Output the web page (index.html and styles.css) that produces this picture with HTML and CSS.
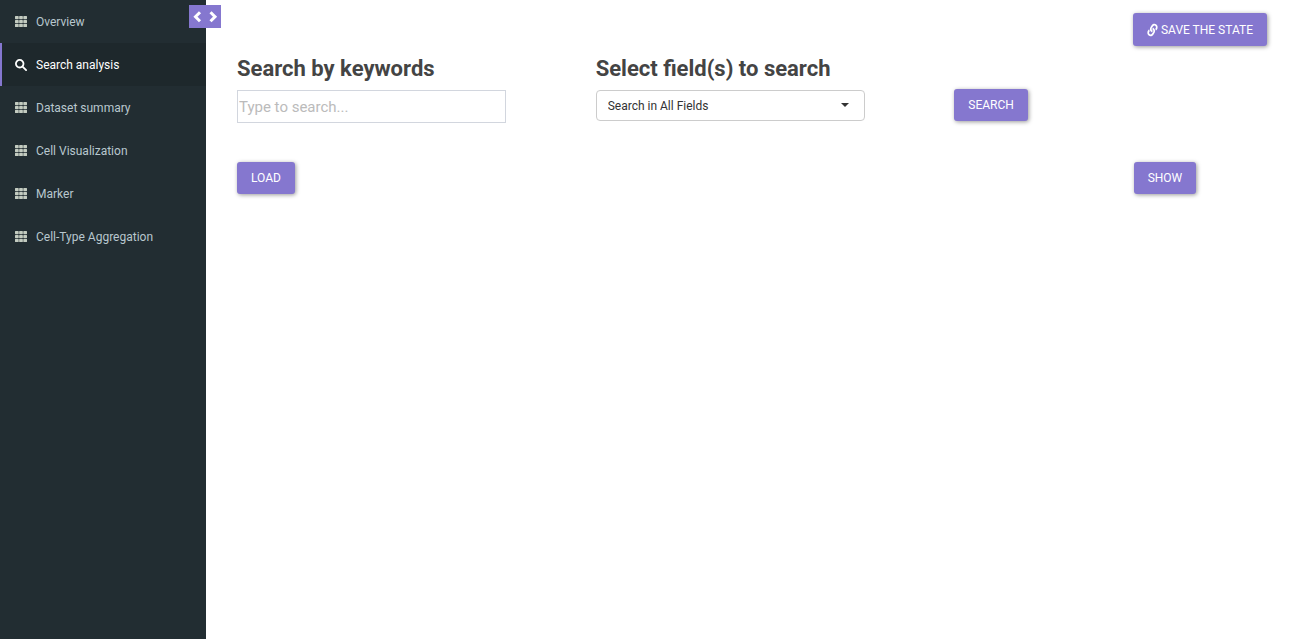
FILE: index.html
```html
<!DOCTYPE html>
<html lang="en">
<head>
<meta charset="utf-8">
<title>Search analysis</title>
<link rel="stylesheet" href="styles.css">
</head>
<body>
<svg class="sprite" aria-hidden="true">
  <symbol id="grid" viewBox="0 0 12 11">
    <path d="M.6 0h2.500q.6 0 .6.6v2q0 .6-.6.6H.6Q0 3.200 0 2.600v-2Q0 0 .6 0zM4.750 0h2.500q.6 0 .6.6v2q0 .6-.6.6h-2.500q-.6 0-.6-.6v-2q0-.6.6-.6zM8.900 0h2.500q.6 0 .6.6v2q0 .6-.6.6H8.900q-.6 0-.6-.6v-2q0-.6.6-.6zM.6 3.900h2.500q.6 0 .6.6v2q0 .6-.6.6H.6q-.6 0-.6-.6v-2q0-.6.6-.6zM4.750 3.900h2.500q.6 0 .6.6v2q0 .6-.6.6h-2.500q-.6 0-.6-.6v-2q0-.6.6-.6zM8.900 3.900h2.500q.6 0 .6.6v2q0 .6-.6.6H8.900q-.6 0-.6-.6v-2q0-.6.6-.6zM.6 7.800h2.500q.6 0 .6.6v2q0 .6-.6.6H.6q-.6 0-.6-.6v-2q0-.6.6-.6zM4.750 7.800h2.500q.6 0 .6.6v2q0 .6-.6.6h-2.500q-.6 0-.6-.6v-2q0-.6.6-.6zM8.900 7.800h2.500q.6 0 .6.6v2q0 .6-.6.6H8.900q-.6 0-.6-.6v-2q0-.6.6-.6z"/>
  </symbol>
</svg>
<div class="app">
  <aside class="sidebar">
    <nav class="menu">
      <a class="item" href="#overview"><svg class="icon"><use href="#grid"/></svg>Overview</a>
      <a class="item active" href="#search" aria-current="page"><svg class="icon search-icon" viewBox="0 0 12 12"><circle cx="4.700" cy="4.700" r="3.800"/><path d="M7.600 7.600l3.500 3.500"/></svg>Search analysis</a>
      <a class="item" href="#dataset"><svg class="icon"><use href="#grid"/></svg>Dataset summary</a>
      <a class="item" href="#cells"><svg class="icon"><use href="#grid"/></svg>Cell Visualization</a>
      <a class="item" href="#marker"><svg class="icon"><use href="#grid"/></svg>Marker</a>
      <a class="item" href="#aggregation"><svg class="icon"><use href="#grid"/></svg>Cell-Type Aggregation</a>
    </nav>
    <button class="toggle" type="button" aria-label="Toggle sidebar">
      <svg class="chevrons" viewBox="0 0 32 23"><path d="M11 7.300L6.500 11.800L11 16.300M21.500 7.300L26 11.800L21.500 16.300"/></svg>
    </button>
  </aside>
  <main class="content">
    <div class="save">
      <button class="btn" type="button"><svg class="link-icon" viewBox="0 0 512 512" preserveAspectRatio="none"><path transform="rotate(-8 256 256)" d="M326.612 185.391c59.747 59.809 58.927 155.698.36 214.590-.11.120-.24.250-.36.370l-67.200 67.200c-59.270 59.270-155.699 59.262-214.960 0-59.270-59.260-59.270-155.700 0-214.960l37.106-37.106c9.840-9.840 26.786-3.300 27.294 10.606.648 17.722 3.826 35.527 9.690 52.721 1.986 5.822.567 12.262-3.783 16.612l-13.087 13.087c-28.026 28.026-28.905 73.660-1.155 101.960 28.024 28.579 74.086 28.749 102.325.51l67.200-67.190c28.191-28.191 28.073-73.757 0-101.830-3.701-3.694-7.429-6.564-10.341-8.569a16.037 16.037 0 0 1-6.947-12.606c-.396-10.567 3.348-21.456 11.698-29.806l21.054-21.055c5.521-5.521 14.182-6.199 20.584-1.731a152.482 152.482 0 0 1 20.522 17.197zM467.547 44.449c-59.261-59.262-155.690-59.270-214.960 0l-67.200 67.200c-.12.120-.25.250-.36.370-58.566 58.892-59.387 154.781.36 214.590a152.454 152.454 0 0 0 20.521 17.196c6.402 4.468 15.064 3.789 20.584-1.731l21.054-21.055c8.350-8.350 12.094-19.239 11.698-29.806a16.037 16.037 0 0 0-6.947-12.606c-2.912-2.005-6.640-4.875-10.341-8.569-28.073-28.073-28.191-73.639 0-101.830l67.200-67.190c28.239-28.239 74.300-28.069 102.325.51 27.750 28.300 26.872 73.934-1.155 101.960l-13.087 13.087c-4.350 4.350-5.769 10.790-3.783 16.612 5.864 17.194 9.042 34.999 9.690 52.721.509 13.906 17.454 20.446 27.294 10.606l37.106-37.106c59.271-59.259 59.271-155.699.001-214.959z"/></svg>SAVE THE STATE</button>
    </div>
    <div class="field keywords">
      <label class="title" for="keywords">Search by keywords</label>
      <input class="input" id="keywords" type="text" placeholder="Type to search...">
    </div>
    <div class="field fields">
      <label class="title" for="fields">Select field(s) to search</label>
      <div class="select-wrap">
        <select class="select" id="fields"><option>Search in All Fields</option></select>
        <svg class="caret" viewBox="0 0 8 4"><path d="M0 0h8L4 4z"/></svg>
      </div>
    </div>
    <div class="search"><button class="btn" type="button">SEARCH</button></div>
    <div class="load"><button class="btn" type="button">LOAD</button></div>
    <div class="show"><button class="btn" type="button">SHOW</button></div>
  </main>
</div>
</body>
</html>
```
FILE: styles.css
```css
* { box-sizing: border-box; }
body { margin: 0; font-family: Roboto, "Liberation Sans", sans-serif; font-size: 12px; color: #444; background: #fff; }
.sprite { position: absolute; width: 0; height: 0; }
.app { display: flex; min-height: 100vh; }
.sidebar { position: relative; flex: none; width: 206px; background: #222d32; }
.menu { display: flex; flex-direction: column; }
.item { display: flex; align-items: center; gap: 9px; height: 43px; padding-left: 12px; border-left: 3px solid transparent; color: #b8c7ce; text-decoration: none; }
.item.active { background: #1e282c; border-left: 2px solid #8577cf; padding-left: 13px; color: #fff; }
.icon { width: 12px; height: 11px; fill: #c3cbc0; }
.search-icon { height: 12px; fill: none; stroke: #fff; stroke-width: 1.800; stroke-linecap: round; }
.toggle { position: absolute; top: 5px; right: -15px; width: 32px; height: 23px; padding: 0; border: 0; background: #8577cf; cursor: pointer; }
.chevrons { display: block; width: 32px; height: 23px; fill: none; stroke: #fff; stroke-width: 3; }
.content { flex: 1; display: grid; grid-template-columns: repeat(12, 1fr); column-gap: 30px; align-content: start; padding: 13px 16px 16px 31px; }
.save, .search, .load, .show { display: flex; align-items: flex-start; }
.save { grid-column: 11 / -1; grid-row: 1; justify-content: flex-end; padding-right: 16px; }
.keywords { grid-column: 1 / 5; grid-row: 2; }
.fields { grid-column: 5 / 9; grid-row: 2; }
.search { grid-column: 9 / 11; grid-row: 2; padding-top: 43px; }
.load { grid-column: 1 / 5; grid-row: 3; padding-top: 39px; }
.show { grid-column: 11 / -1; grid-row: 3; padding-top: 39px; }
.btn { display: flex; align-items: center; gap: 3px; height: 32px; padding: 0 14px; border: 0; border-radius: 3px; background: #8577cf; color: #fff; font: 12px Roboto, "Liberation Sans", sans-serif; white-space: nowrap; box-shadow: 1px 1px 4px rgba(0, 0, 0, .4); cursor: pointer; }
.save .btn { height: 33px; }
.link-icon { width: 11px; height: 12px; fill: #fff; overflow: visible; }
.field { display: flex; flex-direction: column; align-items: flex-start; padding-top: 9px; }
.title { margin-bottom: 7px; font-size: 22px; font-weight: 700; line-height: 28px; }
.input { width: 82%; height: 33px; padding: 0 1px; border: 1px solid #d2d6de; border-radius: 0; background: #fff; font: 15px Roboto, "Liberation Sans", sans-serif; color: #444; }
.input::placeholder { color: #bbb; }
.select-wrap { position: relative; width: 82%; }
.select { display: block; width: 100%; height: 31px; padding: 0 30px 0 11px; border: 1px solid #ccc; border-radius: 4px; background: #fff; appearance: none; font: 12px Roboto, "Liberation Sans", sans-serif; color: #333; }
.caret { position: absolute; top: 13px; right: 16px; width: 8px; height: 4px; fill: #333; pointer-events: none; }
```
